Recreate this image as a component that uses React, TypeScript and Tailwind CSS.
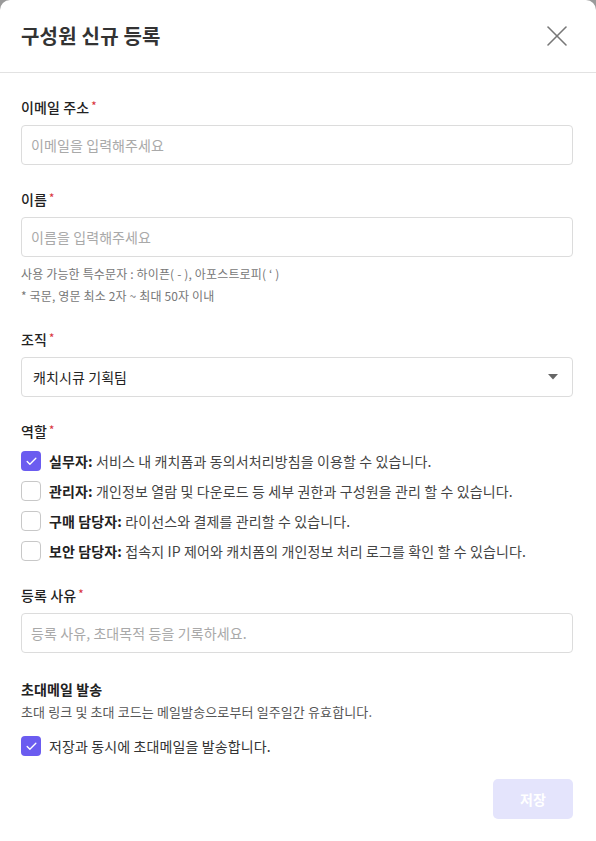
import { X, Check } from 'lucide-react';

const font = { fontFamily: '"Noto Sans CJK KR", "Noto Sans", sans-serif' };

function Label({ text, required = true }: { text: string; required?: boolean }) {
  return (
    <div className="flex items-start h-5 text-[14px] leading-5 font-medium text-[#222] tracking-[0.1px]">
      {text}
      {required && <span className="ml-[2px] text-[#d9363e] text-[11px] leading-4">*</span>}
    </div>
  );
}

function TextInput({ placeholder }: { placeholder: string }) {
  return (
    <div className="mt-2 h-10 w-full rounded-[4px] border border-[#dcdcdc] px-[9px] flex items-center text-[14px] text-[#a9a9a9] tracking-[0.1px]">
      {placeholder}
    </div>
  );
}

function Box({ checked }: { checked: boolean }) {
  return checked ? (
    <div className="w-5 h-5 rounded-[4px] bg-[#6b5cf0] flex items-center justify-center shrink-0">
      <Check size={13} strokeWidth={2.5} className="text-white" />
    </div>
  ) : (
    <div className="w-5 h-5 rounded-[4px] border border-[#c8c8c8] bg-white shrink-0" />
  );
}

const roles = [
  { title: '실무자:', desc: '서비스 내 캐치폼과 동의서처리방침을 이용할 수 있습니다.', checked: true },
  { title: '관리자:', desc: '개인정보 열람 및 다운로드 등 세부 권한과 구성원을 관리 할 수 있습니다.', checked: false },
  { title: '구매 담당자:', desc: '라이선스와 결제를 관리할 수 있습니다.', checked: false },
  { title: '보안 담당자:', desc: '접속지 IP 제어와 캐치폼의 개인정보 처리 로그를 확인 할 수 있습니다.', checked: false },
];

export default function App() {
  return (
    <div className="w-[596px] h-[841px] bg-[#9a9a9a]" style={font}>
      <div className="w-full h-full bg-white rounded-t-[10px] flex flex-col">
        <div className="h-[73px] border-b border-[#e2e2e2] pl-[21px] pr-[21px] flex items-center justify-between">
          <h1 className="text-[20px] font-bold text-[#333] tracking-[0.2px]">구성원 신규 등록</h1>
          <X size={36} strokeWidth={1.05} className="text-[#777]" />
        </div>

        <div className="pl-[21px] pr-[23px] pt-[24px] flex flex-col">
          <Label text="이메일 주소" />
          <TextInput placeholder="이메일을 입력해주세요" />

          <div className="mt-6">
            <Label text="이름" />
            <TextInput placeholder="이름을 입력해주세요" />
            <div className="mt-[6px] text-[12px] leading-[22px] text-[#777] tracking-[0.15px]">
              <p>사용 가능한 특수문자 : 하이픈( - ), 아포스트로피( ‘ )</p>
              <p>* 국문, 영문 최소 2자 ~ 최대 50자 이내</p>
            </div>
          </div>

          <div className="mt-[22px]">
            <Label text="조직" />
            <div className="mt-2 h-10 w-full rounded-[4px] border border-[#dcdcdc] pl-[11px] pr-[14px] flex items-center justify-between text-[14px] text-[#222]">
              <span className="tracking-[0.1px]">캐치시큐 기획팀</span>
              <svg width="10" height="6" viewBox="0 0 10 6">
                <path d="M0 0 H10 L5 5.5 Z" fill="#666" />
              </svg>
            </div>
          </div>

          <div className="mt-6">
            <Label text="역할" />
            <div className="mt-[10px] flex flex-col gap-[10px]">
              {roles.map((r) => (
                <div key={r.title} className="flex items-center gap-[8px] h-5 text-[14px] text-[#444] tracking-[0.12px]">
                  <Box checked={r.checked} />
                  <span>
                    <span className="font-bold text-[#222]">{r.title}</span> {r.desc}
                  </span>
                </div>
              ))}
            </div>
          </div>

          <div className="mt-[24px]">
            <Label text="등록 사유" />
            <TextInput placeholder="등록 사유, 초대목적 등을 기록하세요." />
          </div>

          <div className="mt-[26px]">
            <div className="h-5 text-[14px] leading-5 font-bold text-[#222] tracking-[0.1px]">초대메일 발송</div>
            <p className="mt-[3px] text-[13px] leading-5 text-[#555] tracking-[0.12px]">초대 링크 및 초대 코드는 메일발송으로부터 일주일간 유효합니다.</p>
            <div className="mt-[14px] flex items-center gap-[8px] h-5 text-[14px] text-[#333] tracking-[0.12px]">
              <Box checked />
              <span>저장과 동시에 초대메일을 발송합니다.</span>
            </div>
          </div>

          <div className="mt-[23px] flex justify-end">
            <button className="w-[80px] h-10 rounded-[5px] bg-[#e4e4fc] text-white text-[14px] font-bold">저장</button>
          </div>
        </div>
      </div>
    </div>
  );
}
